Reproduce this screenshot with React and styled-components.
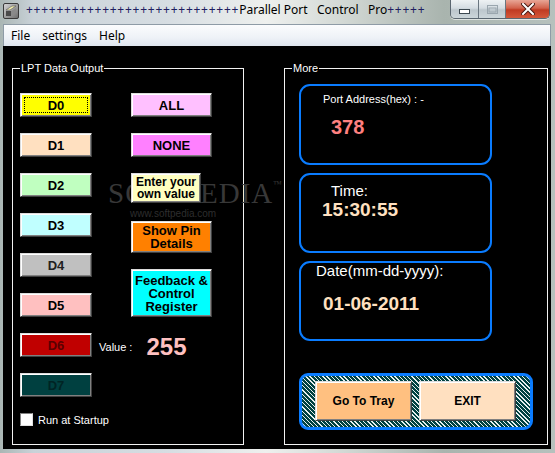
import styled, { createGlobalStyle } from "styled-components";

const GlobalStyle = createGlobalStyle`
  html, body {
    margin: 0;
    padding: 0;
  }
  body {
    width: 555px;
    height: 453px;
    overflow: hidden;
    font-family: "Liberation Sans", Arial, sans-serif;
  }
`;

const Window = styled.div`
  width: 555px;
  height: 453px;
  display: flex;
  flex-direction: column;
  box-sizing: border-box;
  background: linear-gradient(
    90deg,
    #aab6b4 0%,
    #c9d2d8 6%,
    #d6dde2 30%,
    #eef0ee 48%,
    #d2d8d4 62%,
    #a9b4ae 80%,
    #b6c1bd 100%
  );
`;

const TitleBar = styled.div`
  height: 24px;
  display: flex;
  align-items: flex-start;
  flex-shrink: 0;
`;

const AppIcon = styled.div`
  width: 16px;
  height: 16px;
  margin: 3px 0 0 3px;
`;

const Title = styled.div`
  margin-left: 7px;
  font-family: "Noto Sans", "Open Sans", sans-serif;
  font-size: 12px;
  line-height: 20px;
  color: #000;
  white-space: pre;
`;

const Pluses = styled.span`
  letter-spacing: 0.75px;
  color: #202060;
`;

const Spacer = styled.div`
  flex: 1;
`;

const CaptionGroup = styled.div`
  display: flex;
  height: 18px;
  margin-right: 5px;
  border: 1px solid #5a6670;
  border-top: none;
  border-radius: 0 0 5px 5px;
  overflow: hidden;
  box-shadow: 0 1px 0 rgba(255, 255, 255, 0.6);
`;

const CaptionButton = styled.div`
  width: ${(p) => p.$w}px;
  display: flex;
  align-items: center;
  justify-content: center;
  box-sizing: border-box;
  border-left: ${(p) => (p.$first ? "none" : "1px solid #6a7680")};
  background: ${(p) =>
    p.$close
      ? "linear-gradient(#e8a696 0%, #d2624c 45%, #c03a22 55%, #d4583a 100%)"
      : "linear-gradient(#eef2f4 0%, #d4dce2 45%, #bcc6cc 55%, #ccd6da 100%)"};
`;

const MenuBar = styled.div`
  height: 22px;
  display: flex;
  align-items: center;
  margin: 0 4px 0 3px;
  padding-left: 1px;
  flex-shrink: 0;
  box-sizing: border-box;
  border-top: 1px solid #8e9ba6;
  border-left: 1px solid #8e9ba6;
  border-right: 1px solid #8e9ba6;
  background: linear-gradient(#fbfcfd 0%, #eef2f7 60%, #dfe6ef 100%);
`;

const MenuItem = styled.div`
  padding: 0 6px;
  font-family: "Noto Sans", "Open Sans", sans-serif;
  font-size: 12px;
  color: #000;
`;

const Client = styled.div`
  flex: 1;
  margin: 0 4px 4px 3px;
  background: #000;
  display: flex;
  gap: 40px;
  padding: 16px 3px 4px 9px;
  box-sizing: border-box;
`;

const Group = styled.fieldset`
  margin: 0;
  width: ${(p) => p.$w}px;
  box-sizing: border-box;
  border: 1px solid #f2f2f2;
  padding: ${(p) => p.$pad};
  min-width: 0;
  position: relative;
`;

const Legend = styled.legend`
  font-size: 11px;
  line-height: 13px;
  color: #fff;
  padding: 0 1px;
  margin-left: ${(p) => p.$shift || 0}px;
`;

const Watermark = styled.div`
  position: absolute;
  left: 95px;
  top: 103px;
  font-family: "Liberation Serif", "Times New Roman", serif;
  font-size: 29px;
  letter-spacing: 1px;
  color: #383838;
  line-height: 30px;
  pointer-events: none;
  z-index: 0;
`;

const WatermarkSmall = styled.div`
  font-family: "Liberation Sans", Arial, sans-serif;
  font-size: 10px;
  letter-spacing: 0;
  line-height: 11px;
  margin-left: 22px;
  color: #2e2e2e;
`;

const Tm = styled.sup`
  font-size: 9px;
  vertical-align: top;
  line-height: 12px;
`;

const Layout = styled.div`
  display: flex;
  gap: 7px;
`;

const Column = styled.div`
  display: flex;
  flex-direction: column;
  gap: ${(p) => p.$gap || 0}px;
`;

const Btn = styled.button`
  position: relative;
  z-index: 1;
  width: ${(p) => p.$w}px;
  height: ${(p) => p.$h}px;
  margin: ${(p) => p.$m || 0};
  padding: 0;
  flex-shrink: 0;
  box-sizing: border-box;
  background: ${(p) => p.$bg};
  color: ${(p) => p.$fg || "#000"};
  font-family: "Liberation Sans", Arial, sans-serif;
  font-weight: bold;
  font-size: ${(p) => p.$fs || 13}px;
  line-height: ${(p) => p.$lh || 13}px;
  text-align: center;
  border: 1px solid;
  border-color: #dcdcdc #404040 #404040 #dcdcdc;
  box-shadow: inset 1px 1px 0 #ffffff, inset -1px -1px 0 #808080;
  outline: ${(p) => (p.$focus ? "1px dotted #000" : "none")};
  outline-offset: -5px;
  cursor: pointer;
`;

const ValueRow = styled.div`
  height: 24px;
  display: flex;
  align-items: center;
`;

const ValueLabel = styled.span`
  font-size: 11px;
  color: #fff;
  margin-top: 3px;
`;

const ValueNumber = styled.span`
  margin-left: 14px;
  margin-top: 3px;
  font-size: 24px;
  font-weight: bold;
  color: #ffc0c0;
`;

const CheckRow = styled.label`
  display: flex;
  align-items: center;
  margin-top: 16px;
  font-size: 11px;
  color: #fff;
  gap: 5px;
`;

const CheckBox = styled.span`
  width: 13px;
  height: 13px;
  box-sizing: border-box;
  background: #fff;
  border: 1px solid;
  border-color: #808080 #e0e0e0 #e0e0e0 #808080;
`;

const InfoStack = styled.div`
  display: flex;
  flex-direction: column;
  gap: 8px;
`;

const InfoBox = styled.div`
  width: 193px;
  height: ${(p) => p.$h}px;
  box-sizing: border-box;
  border: 2px solid #0a7cff;
  border-radius: 11px;
  display: flex;
  flex-direction: column;
  align-items: flex-start;
`;

const InfoLabel = styled.div`
  color: #fff;
  font-size: ${(p) => p.$fs}px;
  line-height: ${(p) => p.$fs + 2}px;
  margin: ${(p) => p.$m};
  white-space: nowrap;
`;

const InfoValue = styled.div`
  color: ${(p) => p.$c};
  font-weight: bold;
  font-size: ${(p) => p.$fs}px;
  line-height: ${(p) => p.$fs + 2}px;
  margin: ${(p) => p.$m};
`;

const TrayBox = styled.div`
  width: 234px;
  height: 57px;
  margin-top: 32px;
  box-sizing: border-box;
  border: 3px solid #0a7cff;
  border-radius: 9px;
  padding: 5px 0 0 13px;
  display: flex;
  gap: 7px;
  background: repeating-linear-gradient(
    45deg,
    #004242 0px,
    #004242 2px,
    #e8f0f0 2px,
    #e8f0f0 3px
  );
`;

function WindowIcon() {
  return (
    <svg width="16" height="16" viewBox="0 0 16 16">
      <defs>
        <linearGradient id="ig" x1="0" y1="0" x2="1" y2="1">
          <stop offset="0" stopColor="#d8d8d8" />
          <stop offset="1" stopColor="#6a6a6a" />
        </linearGradient>
      </defs>
      <rect x="0.5" y="0.5" width="15" height="15" rx="1.5" fill="url(#ig)" stroke="#3a3a3a" />
      <path d="M3 7 L9 3 L13 3 L7 7 Z" fill="#f4f0b0" stroke="#555" strokeWidth="0.6" />
      <path d="M3 8 L8 8 L8 13 L3 13 Z" fill="#4a4a4a" />
      <path d="M8 8 L13 5 L13 10 L8 13 Z" fill="#8a8a8a" />
    </svg>
  );
}

const dButtons = [
  { t: "D0", bg: "#ffff00", focus: true },
  { t: "D1", bg: "#ffe0c0" },
  { t: "D2", bg: "#c0ffc0" },
  { t: "D3", bg: "#c0ffff" },
  { t: "D4", bg: "#c0c0c0", fg: "#202020" },
  { t: "D5", bg: "#ffc0c0" },
  { t: "D6", bg: "#c00000", fg: "#5a0000" },
  { t: "D7", bg: "#004040", fg: "#002424" },
];

export default function App() {
  return (
    <>
      <GlobalStyle />
      <Window>
        <TitleBar>
          <AppIcon>
            <WindowIcon />
          </AppIcon>
          <Title>
            <Pluses>{"+".repeat(28)}</Pluses>
            {"Parallel Port   Control   Pro"}
            <Pluses>{"+".repeat(5)}</Pluses>
          </Title>
          <Spacer />
          <CaptionGroup>
            <CaptionButton $w={27} $first>
              <svg width="11" height="5" viewBox="0 0 11 5" style={{ marginTop: 5 }}>
                <rect x="0.5" y="0.5" width="10" height="4" fill="#fff" stroke="#3c4850" />
              </svg>
            </CaptionButton>
            <CaptionButton $w={27}>
              <svg width="11" height="9" viewBox="0 0 11 9">
                <rect x="0.5" y="0.5" width="10" height="8" fill="none" stroke="#9aa6ae" />
                <rect x="2" y="3" width="7" height="4" fill="none" stroke="#9aa6ae" />
              </svg>
            </CaptionButton>
            <CaptionButton $w={44} $close>
              <svg width="14" height="12" viewBox="0 0 14 12">
                <path d="M2 1 L12 11 M12 1 L2 11" stroke="#4a1a12" strokeWidth="4" strokeLinecap="square" />
                <path d="M2 1 L12 11 M12 1 L2 11" stroke="#fff" strokeWidth="2" strokeLinecap="square" />
              </svg>
            </CaptionButton>
          </CaptionGroup>
        </TitleBar>

        <MenuBar>
          <MenuItem>File</MenuItem>
          <MenuItem>settings</MenuItem>
          <MenuItem>Help</MenuItem>
        </MenuBar>

        <Client>
          <Group $w={232} $pad="18px 7px 0 7px">
            <Legend>LPT Data Output</Legend>
            <Watermark>
              SOFTPEDIA<Tm>™</Tm>
              <WatermarkSmall>www.softpedia.com</WatermarkSmall>
            </Watermark>
            <Layout>
              <Column $gap={16}>
                {dButtons.map((b) => (
                  <Btn key={b.t} $w={72} $h={24} $bg={b.bg} $fg={b.fg} $focus={b.focus}>
                    {b.t}
                  </Btn>
                ))}
              </Column>
              <Column>
                <Btn $w={81} $h={24} $bg="#ffc0ff" $m="0 0 0 32px">
                  ALL
                </Btn>
                <Btn $w={81} $h={24} $bg="#ff80ff" $m="16px 0 0 32px">
                  NONE
                </Btn>
                <Btn $w={70} $h={30} $bg="#ffffc0" $fs={12} $lh={12} $m="16px 0 0 32px">
                  Enter your
                  <br />
                  own value
                </Btn>
                <Btn $w={81} $h={32} $bg="#ff8000" $m="18px 0 0 32px">
                  Show Pin
                  <br />
                  Details
                </Btn>
                <Btn $w={81} $h={48} $bg="#00ffff" $m="16px 0 0 32px">
                  Feedback &amp;
                  <br />
                  Control
                  <br />
                  Register
                </Btn>
                <ValueRow style={{ marginTop: 16 }}>
                  <ValueLabel>Value :</ValueLabel>
                  <ValueNumber>255</ValueNumber>
                </ValueRow>
              </Column>
            </Layout>
            <CheckRow>
              <CheckBox />
              Run at Startup
            </CheckRow>
          </Group>

          <Group $w={264} $pad="9px 0 0 14px">
            <Legend $shift={-7}>More</Legend>
            <InfoStack>
              <InfoBox $h={81}>
                <InfoLabel $fs={11} $m="7px 0 0 22px">
                  Port Address(hex) : -
                </InfoLabel>
                <InfoValue $fs={20} $c="#ff8080" $m="10px 0 0 30px">
                  378
                </InfoValue>
              </InfoBox>
              <InfoBox $h={80}>
                <InfoLabel $fs={15} $m="7px 0 0 30px">
                  Time:
                </InfoLabel>
                <InfoValue $fs={19} $c="#ffe0c0" $m="0 0 0 21px">
                  15:30:55
                </InfoValue>
              </InfoBox>
              <InfoBox $h={80}>
                <InfoLabel $fs={15} $m="-1px 0 0 15px">
                  Date(mm-dd-yyyy):
                </InfoLabel>
                <InfoValue $fs={19} $c="#ffe0c0" $m="14px 0 0 22px">
                  01-06-2011
                </InfoValue>
              </InfoBox>
            </InfoStack>
            <TrayBox>
              <Btn $w={97} $h={40} $bg="#ffc080" $fs={12}>
                Go To Tray
              </Btn>
              <Btn $w={97} $h={40} $bg="#ffe0c0" $fs={12}>
                EXIT
              </Btn>
            </TrayBox>
          </Group>
        </Client>
      </Window>
    </>
  );
}
